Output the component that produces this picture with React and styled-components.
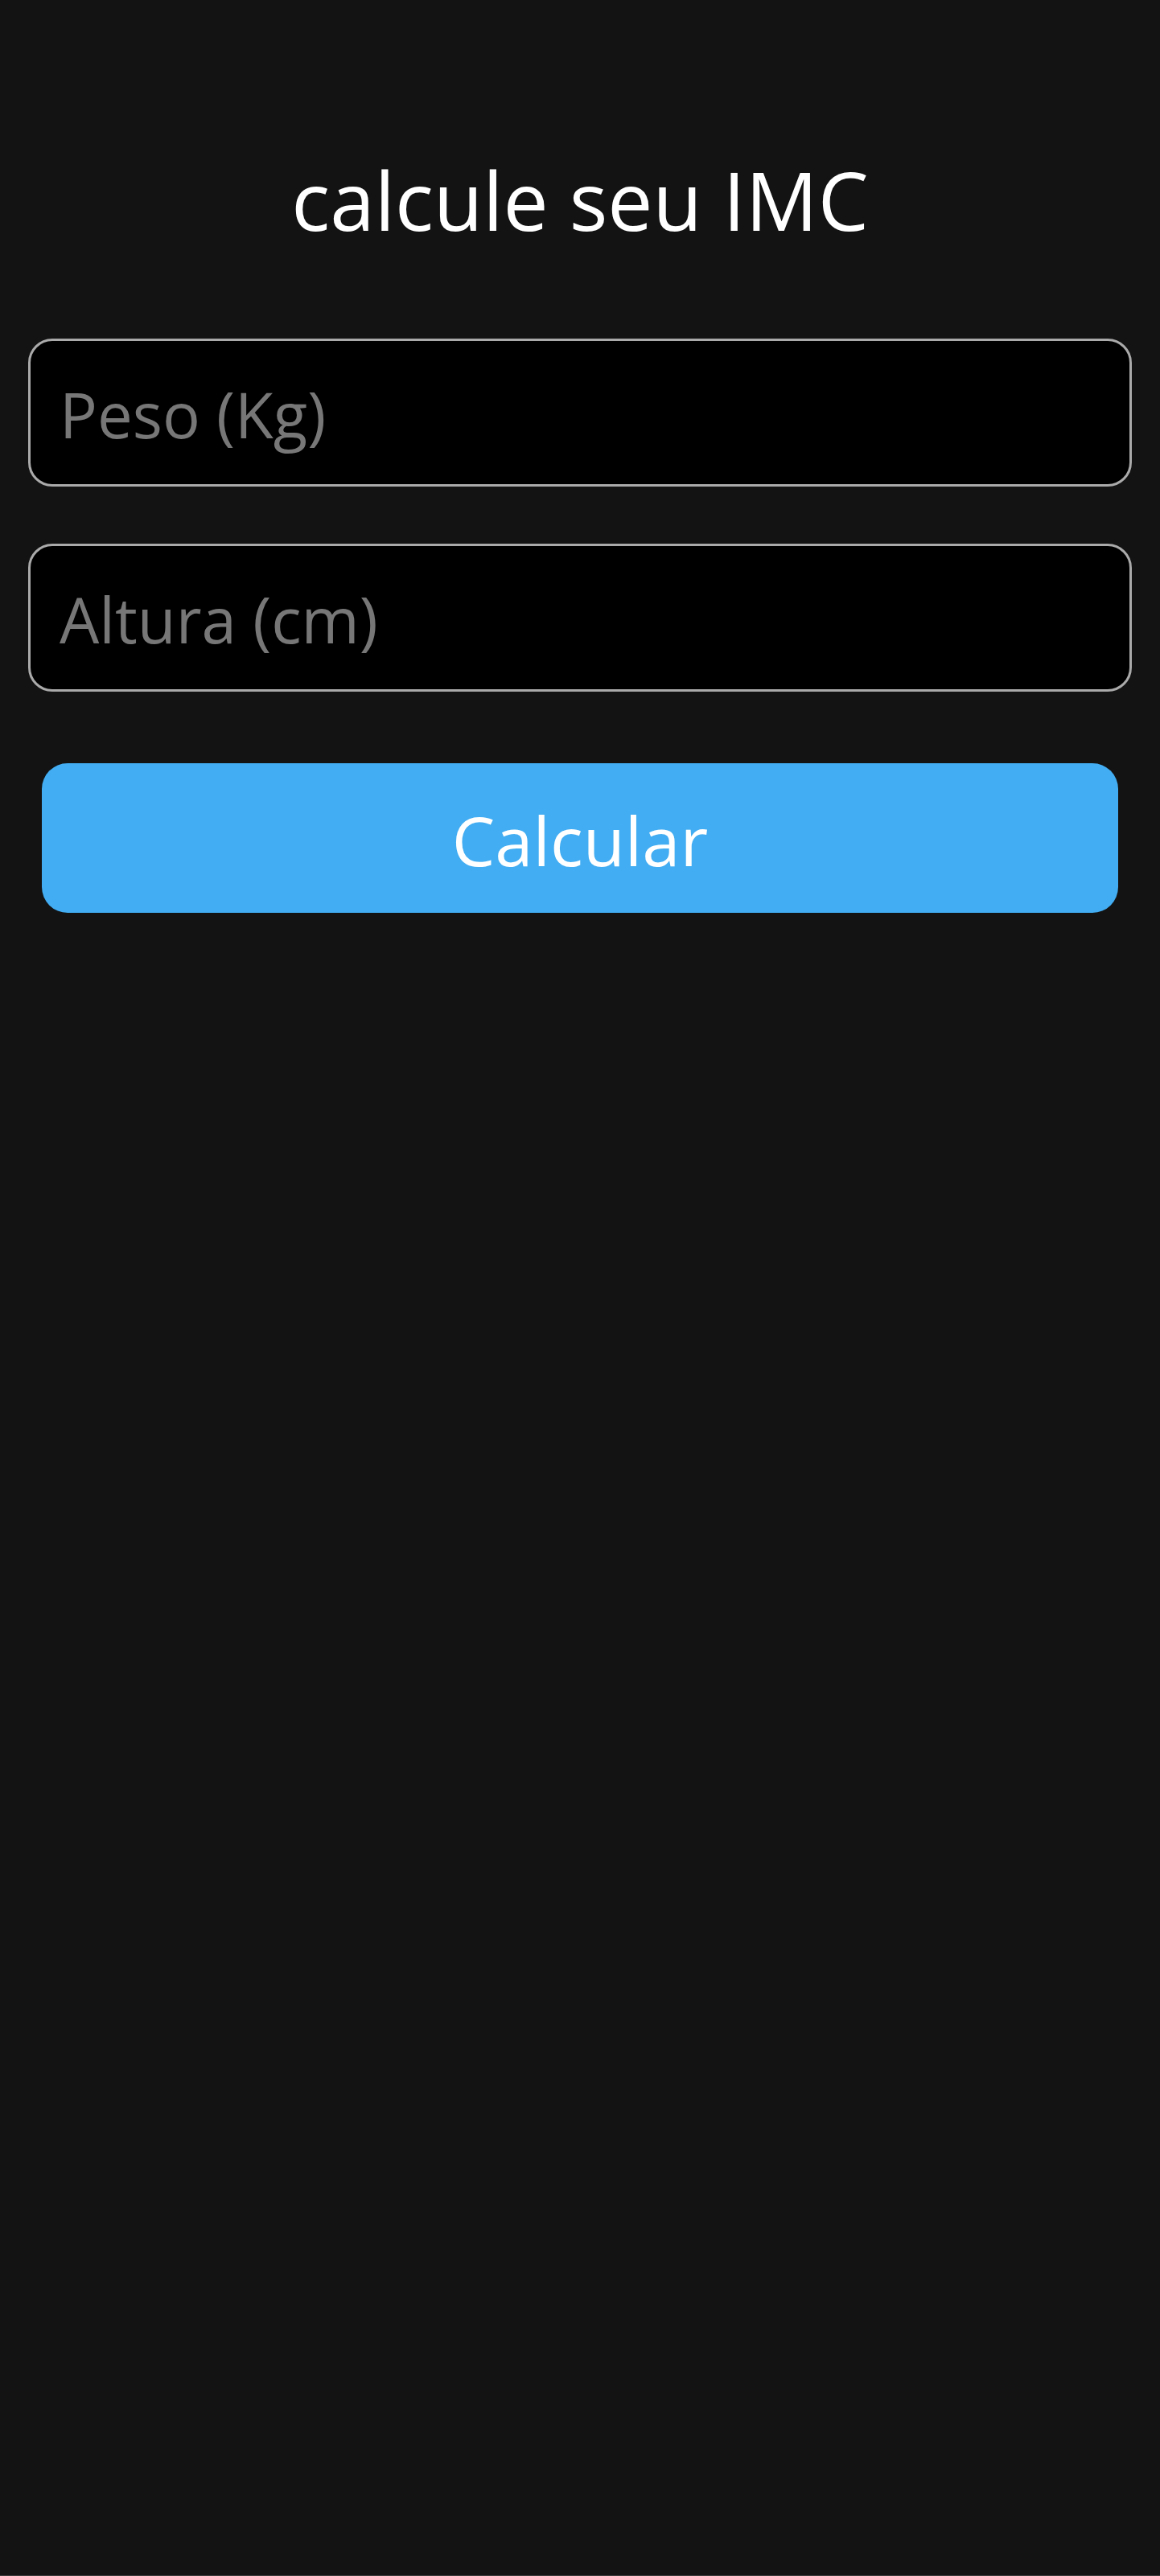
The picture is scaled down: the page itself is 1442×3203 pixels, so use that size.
import React from "react";
import styled, { createGlobalStyle } from "styled-components";

const Global = createGlobalStyle`
  html, body {
    margin: 0;
    padding: 0;
    background: #131313;
  }
  * { box-sizing: border-box; }
`;

const Page = styled.div`
  min-height: 3203px;
  background: #131313;
  font-family: "Open Sans", "Noto Sans", sans-serif;
  padding: 188px 35px 0;
  display: flex;
  flex-direction: column;
  border-bottom: 1px solid #3c3c3c;
`;

const Title = styled.h1`
  margin: 0 0 113px;
  height: 120px;
  line-height: 120px;
  font-size: 100px;
  font-weight: 400;
  color: #ffffff;
  text-align: center;
`;

const Field = styled.input`
  display: block;
  width: 100%;
  height: 184px;
  margin: 0 0 ${(p) => p.$gap}px;
  padding: 4px 36px 0;
  background: #000;
  border: 3px solid #aaaaaa;
  border-radius: 30px;
  color: #ffffff;
  font-family: inherit;
  font-size: 78px;
  outline: none;
  &::placeholder {
    color: #777777;
  }
`;

const Button = styled.button`
  display: block;
  margin: 0 17px;
  height: 186px;
  padding: 4px 0 0;
  border: none;
  border-radius: 32px;
  background: #42adf2;
  color: #ffffff;
  font-family: inherit;
  font-size: 85px;
  cursor: pointer;
`;

export default function App() {
  return (
    <Page>
      <Global />
      <Title>calcule seu IMC</Title>
      <Field $gap={71} placeholder="Peso (Kg)" />
      <Field $gap={89} placeholder="Altura (cm)" />
      <Button>Calcular</Button>
    </Page>
  );
}
